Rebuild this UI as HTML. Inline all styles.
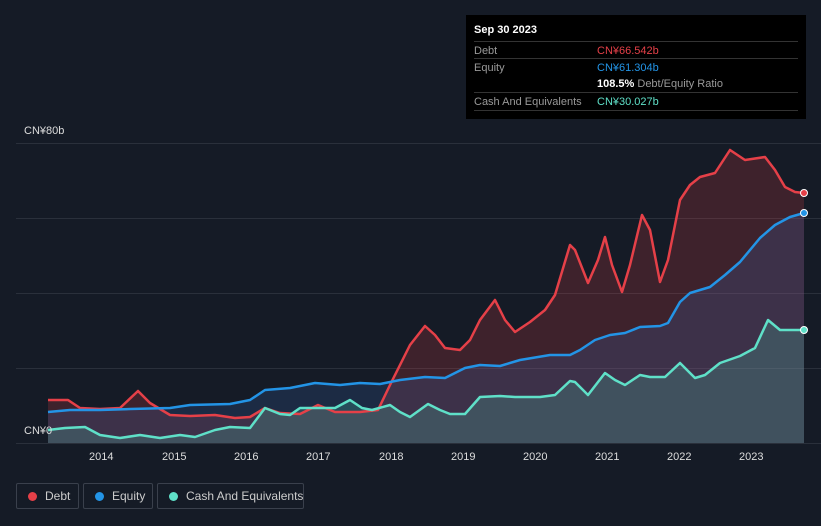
<!DOCTYPE html>
<html><head><meta charset="utf-8"><style>
body{margin:0;width:821px;height:526px;background:#151b26;font-family:"Liberation Sans",sans-serif;overflow:hidden;position:relative}
.tip{position:absolute;left:466px;top:15px;width:340px;height:104px;background:#000;color:#fff;font-size:11px}
.row{position:absolute;left:8px;right:8px;height:17px;border-top:1px solid #333}
.row span{position:absolute;top:3px;white-space:nowrap}
.lg{position:absolute;top:483px;height:26px;border:1px solid #3a404c;border-radius:2px;color:#ccc;font-size:12px;line-height:24px;box-sizing:border-box;white-space:nowrap}
.lg i{position:absolute;left:11px;top:8px;width:9px;height:9px;border-radius:50%}
.ax{position:absolute;color:#ddd;font-size:11px}
</style></head><body>
<svg width="821" height="526" style="position:absolute;left:0;top:0">
<g stroke="#2a303b" stroke-width="1">
<line x1="16" y1="143.5" x2="821" y2="143.5"/><line x1="16" y1="218.5" x2="821" y2="218.5"/><line x1="16" y1="293.5" x2="821" y2="293.5"/><line x1="16" y1="368.5" x2="821" y2="368.5"/><line x1="16" y1="443.5" x2="821" y2="443.5"/>
</g>
<polygon fill="#e5404833" points="48,400 68,400 80,408 100,409 120,408 138,391 150,403 170,415 190,416 215,415 235,418 250,417 265,408 280,413 300,414 318,405 335,412 360,412 378,410 390,385 410,345 425,326 435,335 445,348 460,350 470,340 480,320 495,300 505,320 515,332 530,322 545,310 555,295 570,245 575,250 588,283 598,260 605,237 612,265 622,292 630,265 642,215 650,230 660,282 668,260 680,200 690,185 700,177 715,173 730,150 745,160 765,157 775,170 785,187 795,192 804,193 804,443 48,443"/>
<polygon fill="#3a6fbf33" points="48,412 70,410 100,410 130,409 170,408 190,405 230,404 250,400 265,390 290,388 315,383 340,385 360,383 380,384 400,380 425,377 445,378 465,368 480,365 500,366 520,360 550,355 570,355 580,350 595,340 610,335 625,333 640,327 660,326 668,323 680,302 690,293 710,287 725,275 740,262 760,238 775,225 790,217 804,213 804,443 48,443"/>
<polygon fill="#4fd1b533" points="48,430 65,428 85,427 100,435 120,438 140,435 160,438 180,435 195,437 215,430 230,427 250,428 265,408 280,414 290,415 300,408 320,408 335,408 350,400 362,408 372,410 390,405 400,412 410,417 428,404 440,410 450,414 465,414 480,397 500,396 515,397 540,397 555,395 570,381 575,382 588,395 605,373 615,380 625,385 640,375 650,377 665,377 680,363 695,378 705,375 720,363 740,356 755,348 768,320 780,330 804,330 804,443 48,443"/>
<g fill="none" stroke-width="2.5" stroke-linejoin="round">
<polyline stroke="#e54048" points="48,400 68,400 80,408 100,409 120,408 138,391 150,403 170,415 190,416 215,415 235,418 250,417 265,408 280,413 300,414 318,405 335,412 360,412 378,410 390,385 410,345 425,326 435,335 445,348 460,350 470,340 480,320 495,300 505,320 515,332 530,322 545,310 555,295 570,245 575,250 588,283 598,260 605,237 612,265 622,292 630,265 642,215 650,230 660,282 668,260 680,200 690,185 700,177 715,173 730,150 745,160 765,157 775,170 785,187 795,192 804,193"/>
<polyline stroke="#2394e6" points="48,412 70,410 100,410 130,409 170,408 190,405 230,404 250,400 265,390 290,388 315,383 340,385 360,383 380,384 400,380 425,377 445,378 465,368 480,365 500,366 520,360 550,355 570,355 580,350 595,340 610,335 625,333 640,327 660,326 668,323 680,302 690,293 710,287 725,275 740,262 760,238 775,225 790,217 804,213"/>
<polyline stroke="#5fe0c8" points="48,430 65,428 85,427 100,435 120,438 140,435 160,438 180,435 195,437 215,430 230,427 250,428 265,408 280,414 290,415 300,408 320,408 335,408 350,400 362,408 372,410 390,405 400,412 410,417 428,404 440,410 450,414 465,414 480,397 500,396 515,397 540,397 555,395 570,381 575,382 588,395 605,373 615,380 625,385 640,375 650,377 665,377 680,363 695,378 705,375 720,363 740,356 755,348 768,320 780,330 804,330"/>
</g>
<circle cx="804" cy="193" r="3.5" fill="#e54048" stroke="#fff" stroke-width="1"/>
<circle cx="804" cy="213" r="3.5" fill="#2394e6" stroke="#fff" stroke-width="1"/>
<circle cx="804" cy="330" r="3.5" fill="#5fe0c8" stroke="#fff" stroke-width="1"/>
</svg>
<div class="ax" style="left:24px;top:125px">CN¥80b</div>
<div class="ax" style="left:24px;top:425px">CN¥0</div>
<div class="ax" style="left:89px;top:451px">2014</div><div class="ax" style="left:162px;top:451px">2015</div><div class="ax" style="left:234px;top:451px">2016</div><div class="ax" style="left:306px;top:451px">2017</div><div class="ax" style="left:379px;top:451px">2018</div><div class="ax" style="left:451px;top:451px">2019</div><div class="ax" style="left:523px;top:451px">2020</div><div class="ax" style="left:595px;top:451px">2021</div><div class="ax" style="left:667px;top:451px">2022</div><div class="ax" style="left:739px;top:451px">2023</div>
<div class="tip">
<div style="position:absolute;left:8px;top:9px;font-weight:bold">Sep 30 2023</div>
<div class="row" style="top:26px"><span style="color:#999">Debt</span><span style="left:123px;color:#e54048">CN¥66.542b</span></div>
<div class="row" style="top:43px"><span style="color:#999">Equity</span><span style="left:123px;color:#2394e6">CN¥61.304b</span></div>
<div class="row" style="top:60px;border:none"><span style="left:123px"><b>108.5%</b> <span style="position:static;color:#999">Debt/Equity Ratio</span></span></div>
<div class="row" style="top:77px"><span style="color:#999">Cash And Equivalents</span><span style="left:123px;color:#5fe0c8">CN¥30.027b</span></div>
<div class="row" style="top:95px;height:0"></div>
</div>
<div class="lg" style="left:16px;width:63px"><i style="background:#e54048"></i><span style="position:absolute;left:28px">Debt</span></div>
<div class="lg" style="left:83px;width:70px"><i style="background:#2394e6"></i><span style="position:absolute;left:28px">Equity</span></div>
<div class="lg" style="left:157px;width:147px"><i style="background:#5fe0c8"></i><span style="position:absolute;left:28px">Cash And Equivalents</span></div>
</body></html>
